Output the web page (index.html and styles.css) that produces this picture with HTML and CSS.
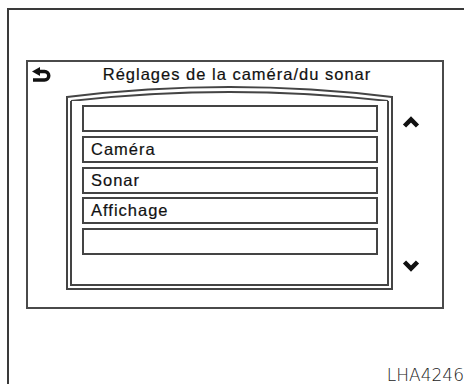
FILE: index.html
```html
<!DOCTYPE html>
<html>
<head>
<meta charset="UTF-8">
<title>Réglages de la caméra/du sonar</title>
<link rel="stylesheet" href="styles.css">
</head>
<body>
	<div class="page">
		<div class="screen">
			<div class="head">
				<svg class="back" width="19" height="15" viewBox="0 0 19 15">
					<polygon points="0,4.5 8,0 8,9" fill="#111"/>
					<path d="M6,4.5 H12.5 A4.25,4.25 0 0 1 12.5,13 H1" fill="none" stroke="#111" stroke-width="3.5"/>
				</svg>
				<h1 class="title">Réglages de la caméra/du sonar</h1>
				<span></span>
			</div>
			<div class="main">
				<div class="list">
					<svg class="cap" width="327" height="15" viewBox="0 0 327 15">
						<path d="M1,15 V11 Q163.5,-9 326,11 V15" fill="none" stroke="#444" stroke-width="2"/>
						<path d="M5,15 Q163.5,-3 322,15" fill="none" stroke="#444" stroke-width="2"/>
					</svg>
					<div class="rows">
						<div class="row"></div>
						<div class="row">Caméra</div>
						<div class="row">Sonar</div>
						<div class="row">Affichage</div>
						<div class="row"></div>
					</div>
				</div>
				<div class="scroll">
					<svg width="18" height="12" viewBox="0 0 18 12">
						<polyline points="2.5,10 9,3.5 15.5,10" fill="none" stroke="#111" stroke-width="4.5"/>
					</svg>
					<svg width="18" height="12" viewBox="0 0 18 12">
						<polyline points="2.5,2 9,8.5 15.5,2" fill="none" stroke="#111" stroke-width="4.5"/>
					</svg>
				</div>
			</div>
		</div>
		<div class="code">LHA4246</div>
	</div>
</body>
</html>
```

FILE: styles.css
```css
body {
	margin: 0;
	background: #fff;
	font-family: "Liberation Sans", Arial, sans-serif;
	color: #111;
}

.page {
	box-sizing: border-box;
	height: 376px;
	margin: 8px 0 0 7px;
	padding: 50px 0 0 17px;
	border-top: 2px solid #3a3a3a;
	border-left: 2px solid #3a3a3a;
	overflow: hidden;
}

.screen {
	box-sizing: border-box;
	width: 418px;
	height: 249px;
	border: 2px solid #4a4a4a;
}

.head {
	display: grid;
	grid-template-columns: 1fr auto 1fr;
	align-items: center;
	height: 24px;
	padding-left: 4px;
}

.back {
	display: block;
}

.title {
	margin: 0;
	font-size: 16.5px;
	font-weight: normal;
	letter-spacing: 1px;
	line-height: 20px;
	-webkit-text-stroke: 0.2px #111;
}

.main {
	display: flex;
	padding-left: 38px;
}

.list {
	width: 327px;
}

.cap {
	display: block;
}

.rows {
	display: flex;
	flex-direction: column;
	gap: 3.75px;
	padding: 4px 9px 29px 10px;
	border: 6px double #444;
	border-top: none;
}

.row {
	box-sizing: border-box;
	display: flex;
	align-items: center;
	height: 27px;
	padding-left: 7px;
	border: 2px solid #444;
	font-size: 16.5px;
	letter-spacing: 1px;
	-webkit-text-stroke: 0.2px #111;
}

.scroll {
	display: flex;
	flex-direction: column;
	justify-content: space-between;
	margin-left: 9px;
	padding: 30px 0 18px;
}

.scroll svg {
	display: block;
}

.code {
	margin-top: 56px;
	text-align: right;
	font-family: "DejaVu Sans", sans-serif;
	font-weight: 200;
	font-size: 17px;
	line-height: 20px;
	color: #222;
}
```
